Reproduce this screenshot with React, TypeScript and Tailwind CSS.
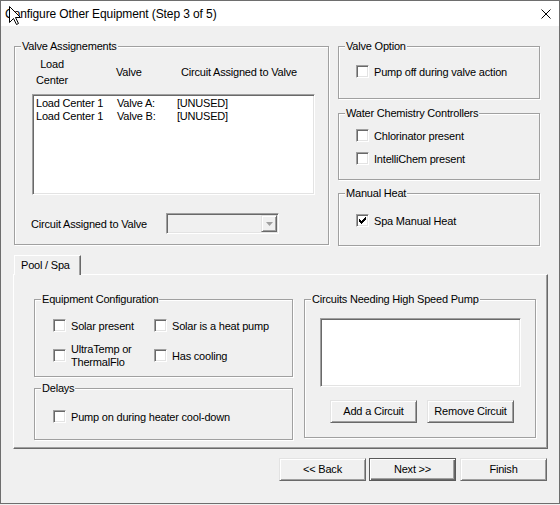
import React from "react";

// Classic Win32 3D edges
const sunken =
  "border border-t-[#a0a0a0] border-l-[#a0a0a0] border-r-white border-b-white shadow-[inset_1px_1px_0_#696969,inset_-1px_-1px_0_#e3e3e3]";
const raised =
  "border border-t-[#e3e3e3] border-l-[#e3e3e3] border-r-[#696969] border-b-[#696969] shadow-[inset_1px_1px_0_#fff,inset_-1px_-1px_0_#a0a0a0] bg-[#f0f0f0]";

function GroupBox({
  title,
  className = "",
  children,
}: {
  title: string;
  className?: string;
  children?: React.ReactNode;
}) {
  return (
    <fieldset
      className={`min-w-0 border border-[#a0a0a0] shadow-[inset_1px_1px_0_#fff,1px_1px_0_#fff] ${className}`}
    >
      <legend className="ml-[6px] px-[1px] leading-[13px] bg-[#f0f0f0]">{title}</legend>
      {children}
    </fieldset>
  );
}

// 7x7 pixel check glyph, one 1x3 column per step
const checkCols = [4, 5, 6, 5, 4, 3, 2];

function Check({
  label,
  checked = false,
  tall = false,
  className = "",
}: {
  label: React.ReactNode;
  checked?: boolean;
  tall?: boolean;
  className?: string;
}) {
  return (
    <div className={`flex items-center ${tall ? "h-[26px]" : "h-[13px]"} ${className}`}>
      <span className={`block w-[13px] h-[13px] shrink-0 bg-white ${sunken}`}>
        {checked && (
          <svg width="11" height="11" viewBox="0 0 11 11" className="block" shapeRendering="crispEdges">
            {checkCols.map((y, i) => (
              <rect key={i} x={2 + i} y={y} width="1" height="3" fill="#000" />
            ))}
          </svg>
        )}
      </span>
      <span className="ml-[5px] pt-[2px] leading-[13px]">{label}</span>
    </div>
  );
}

function Btn({
  children,
  isDefault = false,
  className = "",
}: {
  children: React.ReactNode;
  isDefault?: boolean;
  className?: string;
}) {
  const edge = isDefault
    ? "border border-[#5a5a5a] bg-[#f0f0f0] shadow-[inset_1px_1px_0_#fff,inset_-1px_-1px_0_#696969,inset_-2px_-2px_0_#a0a0a0]"
    : raised;
  return (
    <div className={`w-[87px] h-[23px] flex items-center justify-center leading-[13px] ${edge} ${className}`}>
      {children}
    </div>
  );
}

function Combo() {
  return (
    <div className={`w-[113px] h-[21px] bg-[#f0f0f0] flex items-center justify-end pr-[1px] ${sunken}`}>
      <div className={`w-[16px] h-[17px] flex items-center justify-center ${raised}`}>
        <svg width="7" height="4" viewBox="0 0 7 4" className="block">
          <path d="M0 0h7L3.5 4z" fill="#a0a0a0" />
        </svg>
      </div>
    </div>
  );
}

const valveRows = [
  ["Load Center 1", "Valve A:", "[UNUSED]"],
  ["Load Center 1", "Valve B:", "[UNUSED]"],
];

export default function App() {
  return (
    <div className="relative w-[560px] h-[505px] bg-[#f0f0f0] text-black text-[11px] tracking-[-0.2px] font-['Liberation_Sans',Arial,sans-serif]">
      <div className="w-[560px] h-[504px] border border-[#6e6e6e] flex flex-col bg-[#f0f0f0]">
        {/* Title bar */}
        <div className="h-[25px] shrink-0 bg-white flex items-center justify-between pl-[4px] pr-[8px]">
          <span className="text-[12px] tracking-[-0.1px] leading-[16px]">
            Configure Other Equipment (Step 3 of 5)
          </span>
          <svg width="10" height="10" viewBox="0 0 10 10" className="block">
            <path d="M0.5 0.5L9.5 9.5M9.5 0.5L0.5 9.5" stroke="#000" strokeWidth="1" />
          </svg>
        </div>

        {/* Dialog body */}
        <div className="flex-1 pl-[12px] pt-[14px] flex flex-col">
          <div className="flex ml-[1px] gap-[9px]">
            <GroupBox title="Valve Assignements" className="w-[315px] h-[205px]">
              <div className="flex items-center h-[32px] mt-[3px]">
                <div className="ml-[18px] w-[38px] text-center leading-[16px]">
                  Load
                  <br />
                  Center
                </div>
                <div className="ml-[45px] w-[65px]">Valve</div>
                <div>Circuit Assigned to Valve</div>
              </div>
              <div className={`ml-[17px] mt-[6px] w-[283px] h-[101px] bg-white pl-[3px] pt-[2px] ${sunken}`}>
                {valveRows.map((r, i) => (
                  <div key={i} className="flex leading-[13px]">
                    <span className="w-[81px]">{r[0]}</span>
                    <span className="w-[60px]">{r[1]}</span>
                    <span>{r[2]}</span>
                  </div>
                ))}
              </div>
              <div className="flex items-center mt-[18px] h-[21px]">
                <span className="ml-[16px] w-[135px] pt-[2px] leading-[13px]">Circuit Assigned to Valve</span>
                <Combo />
              </div>
            </GroupBox>

            <div className="flex flex-col w-[202px]">
              <GroupBox title="Valve Option" className="h-[59px]">
                <Check label="Pump off during valve action" className="ml-[17px] mt-[12px]" />
              </GroupBox>
              <GroupBox title="Water Chemistry Controllers" className="h-[73px] mt-[8px]">
                <Check label="Chlorinator present" className="ml-[17px] mt-[9px]" />
                <Check label="IntelliChem present" className="ml-[17px] mt-[10px]" />
              </GroupBox>
              <GroupBox title="Manual Heat" className="h-[59px] mt-[7px]">
                <Check label="Spa Manual Heat" checked className="ml-[17px] mt-[14px]" />
              </GroupBox>
            </div>
          </div>

          {/* Tab strip */}
          <div className="flex mt-[9px]">
            <div className="relative z-10 ml-[1px] -mb-px w-[67px] h-[20px] bg-[#f0f0f0] border-t border-l border-r border-t-white border-l-white border-r-[#696969] shadow-[inset_-1px_0_0_#a0a0a0] pl-[6px] flex items-center">
              Pool / Spa
            </div>
          </div>
          <div className="w-[535px] h-[175px] border border-t-white border-l-white border-r-[#696969] border-b-[#696969] shadow-[inset_-1px_-1px_0_#a0a0a0] pt-[18px] pl-[20px] flex gap-[11px]">
            <div className="flex flex-col gap-[5px] w-[259px]">
              <GroupBox title="Equipment Configuration" className="h-[84px]">
                <div className="grid grid-cols-[101px_1fr] ml-[18px] mt-[13px] gap-y-[10px]">
                  <Check label="Solar present" />
                  <Check label="Solar is a heat pump" />
                  <Check
                    tall
                    label={
                      <>
                        UltraTemp or
                        <br />
                        ThermalFlo
                      </>
                    }
                  />
                  <Check tall label="Has cooling" />
                </div>
              </GroupBox>
              <GroupBox title="Delays" className="h-[58px]">
                <Check label="Pump on during heater cool-down" className="ml-[18px] mt-[15px]" />
              </GroupBox>
            </div>
            <GroupBox title="Circuits Needing High Speed Pump" className="w-[232px] h-[145px]">
              <div className={`ml-[15px] mt-[12px] w-[201px] h-[69px] bg-white ${sunken}`} />
              <div className="flex ml-[25px] mt-[13px] gap-[10px]">
                <Btn>Add a Circuit</Btn>
                <Btn>Remove Circuit</Btn>
              </div>
            </GroupBox>
          </div>

          {/* Wizard buttons */}
          <div className="flex justify-end pr-[12px] mt-[9px]">
            <Btn>&lt;&lt; Back</Btn>
            <Btn isDefault className="ml-[3px]">
              Next &gt;&gt;
            </Btn>
            <Btn className="ml-[4px]">Finish</Btn>
          </div>
        </div>
      </div>

      {/* Mouse pointer resting over the caption */}
      <svg
        width="13"
        height="20"
        viewBox="0 0 13 20"
        className="absolute left-[9px] top-[6px] pointer-events-none"
      >
        <path
          d="M0.5 0.5L0.5 16.5L4.5 12.5L7.5 18.5L9.5 17.5L6.5 11.5L11.5 11.5Z"
          fill="#fff"
          stroke="#000"
          strokeWidth="1"
          strokeLinejoin="miter"
        />
      </svg>
    </div>
  );
}
